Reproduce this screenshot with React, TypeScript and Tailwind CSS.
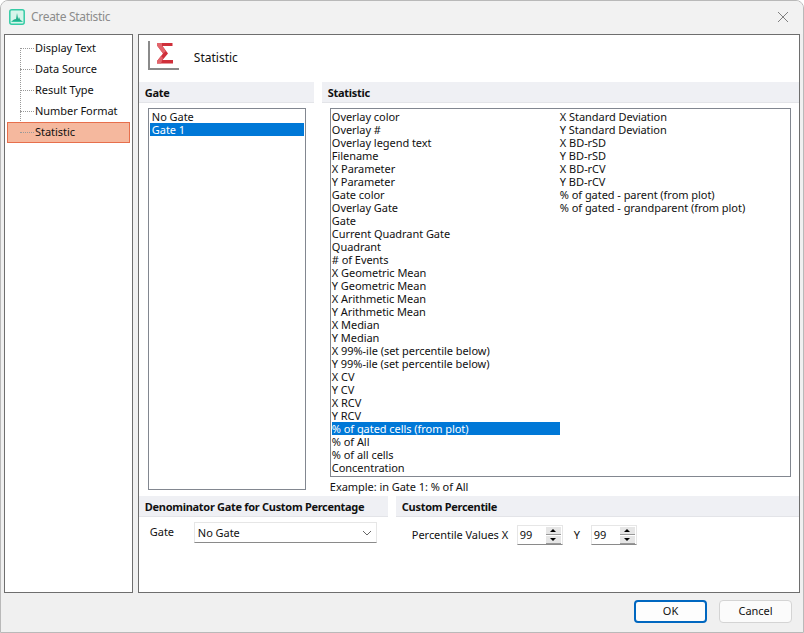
import React from "react";

const col1 = ["Overlay color","Overlay #","Overlay legend text","Filename","X Parameter","Y Parameter","Gate color","Overlay Gate","Gate","Current Quadrant Gate","Quadrant","# of Events","X Geometric Mean","Y Geometric Mean","X Arithmetic Mean","Y Arithmetic Mean","X Median","Y Median","X 99%-ile (set percentile below)","Y 99%-ile (set percentile below)","X CV","Y CV","X RCV","Y RCV","% of gated cells (from plot)","% of All","% of all cells","Concentration"];
const col2 = ["X Standard Deviation","Y Standard Deviation","X BD-rSD","Y BD-rSD","X BD-rCV","Y BD-rCV","% of gated - parent (from plot)","% of gated - grandparent (from plot)"];
const tree = ["Display Text","Data Source","Result Type","Number Format","Statistic"];

function Row({ t, sel }: { t: string; sel?: boolean }) {
  return <div className={"h-[13px] leading-[13px] whitespace-nowrap " + (sel ? "bg-[#0078d7] text-white" : "text-[#111]")}>{t}</div>;
}

function Section({ t, cls }: { t: string; cls: string }) {
  return <div className={"h-[21px] bg-[#eff0f4] border-b border-[#e3e4e8] font-bold text-[11px] leading-[21px] tracking-[-0.3px] text-[#111] " + cls}>{t}</div>;
}

function Spin({ v }: { v: string }) {
  return (
    <div className="w-[46px] h-[20px] bg-white border border-[#e6e6e6] border-b-[#8a8a8a] flex items-center justify-between pl-[2px] pr-[1px]">
      <span className="text-[11px] text-[#111]">{v}</span>
      <div className="flex flex-col gap-[1px]">
        <div className="w-[15px] h-[8px] bg-[#e6e6e6] border-b border-[#999] flex items-center justify-center"><div className="w-0 h-0 border-x-[3px] border-x-transparent border-b-[3px] border-b-black" /></div>
        <div className="w-[15px] h-[8px] bg-[#e6e6e6] border-b border-[#999] flex items-center justify-center"><div className="w-0 h-0 border-x-[3px] border-x-transparent border-t-[3px] border-t-black" /></div>
      </div>
    </div>
  );
}

export default function App() {
  return (
    <div className="w-[804px] h-[633px] bg-[#f0f0f0] border border-[#b9b9b9] rounded-t-[8px] flex flex-col overflow-hidden text-[11px] tracking-[-0.05px] text-[#111]" style={{ fontFamily: '"Noto Sans", "Open Sans", sans-serif' }}>
      <div className="h-[33px] shrink-0 flex items-center pb-[2px] pl-[8px] pr-[12px] bg-[#f2f2f2]">
        <svg width="16" height="16" viewBox="0 0 16 16" className="shrink-0">
          <rect x="0.8" y="0.8" width="14.4" height="14.4" rx="2" fill="#d6f5ea" stroke="#35cba5" strokeWidth="1.5" />
          <path d="M3 12 L5 10.5 L7 10 L8 4 L9.2 10 L10 8 L11 10.5 L13 12 Z" fill="#22b08c" />
          <path d="M2.5 12.5 H13.5" stroke="#35cba5" />
        </svg>
        <span className="ml-[6px] text-[12px] tracking-[-0.3px] text-[#8c8c8c]">Create Statistic</span>
        <svg width="12" height="12" viewBox="0 0 12 12" className="ml-auto mr-[2px]"><path d="M1 1 L11 11 M11 1 L1 11" stroke="#808080" strokeWidth="1" /></svg>
      </div>

      <div className="h-[559px] shrink-0 flex gap-[5px] px-[3px]">
        <div className="w-[129px] bg-white border border-[#6e6e6e] pt-[3px] pl-[2px] pr-[2px] relative">
          <div className="absolute left-[15px] top-[13px] h-[85px] border-l border-dotted border-[#999]" />
          {tree.map((t, i) => (
            <div key={t} className={"h-[21px] flex items-center relative " + (i === 4 ? "bg-[#f5b89e] border border-[#e76f4c]" : "")}>
              <div className={"absolute w-[14px] border-t border-dotted border-[#999] " + (i === 4 ? "left-[12px] top-[9px]" : "left-[13px] top-[10px]")} />
              <span className={"text-[#111] " + (i === 4 ? "pl-[27px]" : "pl-[28px]")}>{t}</span>
            </div>
          ))}
        </div>

        <div className="w-[663px] bg-white border border-[#6e6e6e] flex flex-col">
          <div className="h-[47px] shrink-0 flex items-start pt-[6px] pl-[9px]">
            <svg width="31" height="29" viewBox="0 0 31 29" className="shrink-0">
              <path d="M1 0 V28 H31" fill="none" stroke="#8a8a8a" strokeWidth="2" />
              <path d="M9 2 H24.5 V5 H14.5 L20 12.5 L14.5 19 H25 V22.5 H9 V20 L15 12.5 L9 4.5 Z" fill="#cf2f3a" />
              <path d="M9 2 H14 V5 L18 10 L15 12.5 L9 4.5 Z M9 22.5 V20 L13 15 L15 17 L13 22.5 Z" fill="#e2656c" />
            </svg>
            <span className="ml-[15px] mt-[8px] text-[12px] tracking-normal text-[#111]">Statistic</span>
          </div>

          <div className="flex gap-[8px] shrink-0">
            <Section t="Gate" cls="w-[175px] pl-[6px]" />
            <Section t="Statistic" cls="flex-1 pl-[6px]" />
          </div>

          <div className="flex h-[393px] shrink-0">
            <div className="w-[158px] ml-[9px] mt-[5px] h-[382px] border border-[#828790] p-[1px]">
              <div className="h-[13px] leading-[13px] pl-[2px] text-[#111] whitespace-nowrap">No Gate</div>
              <div className="h-[13px] leading-[13px] pl-[2px] bg-[#0078d7] text-white whitespace-nowrap">Gate 1</div>
            </div>
            <div className="ml-[24px] flex flex-col">
              <div className="w-[461px] h-[369px] mt-[5px] border border-[#828790] pt-[1px] pl-[1px] flex">
                <div className="w-[228px]">
                  {col1.map((t) => <Row key={t} t={t} sel={t === "% of gated cells (from plot)"} />)}
                </div>
                <div>
                  {col2.map((t) => <Row key={t} t={t} />)}
                </div>
              </div>
              <div className="mt-[3px] h-[14px] leading-[14px]">Example: in Gate 1: % of All</div>
            </div>
          </div>

          <div className="flex gap-[8px] shrink-0">
            <Section t="Denominator Gate for Custom Percentage" cls="w-[249px] pl-[6px]" />
            <Section t="Custom Percentile" cls="flex-1 pl-[6px]" />
          </div>

          <div className="flex shrink-0">
            <div className="w-[257px] flex items-start pt-[5px] pl-[11px]">
              <span className="w-[44px] leading-[20px]">Gate</span>
              <div className="w-[183px] h-[21px] bg-white border border-[#e6e6e6] border-b-[#8a8a8a] flex items-center justify-between pl-[3px] pr-[4px]">
                <span className="pt-[1px]">No Gate</span>
                <svg width="10" height="6" viewBox="0 0 10 6"><path d="M1 1 L5 5 L9 1" fill="none" stroke="#666" /></svg>
              </div>
            </div>
            <div className="flex items-center pt-[8px] pl-[16px]">
              <span className="w-[105px]">Percentile Values X</span>
              <Spin v="99" />
              <span className="w-[28px] text-center">Y</span>
              <Spin v="99" />
            </div>
          </div>
        </div>
      </div>

      <div className="flex-1 flex items-start justify-end gap-[12px] pt-[7px] pr-[11px]">
        <button className="w-[73px] h-[23px] bg-[#fdfdfd] border-2 border-[#0067c0] rounded-[4px] text-[11px] text-[#111]">OK</button>
        <button className="w-[73px] h-[23px] bg-[#fbfbfb] border border-[#d4d4d4] rounded-[4px] text-[11px] text-[#111]">Cancel</button>
      </div>
    </div>
  );
}
